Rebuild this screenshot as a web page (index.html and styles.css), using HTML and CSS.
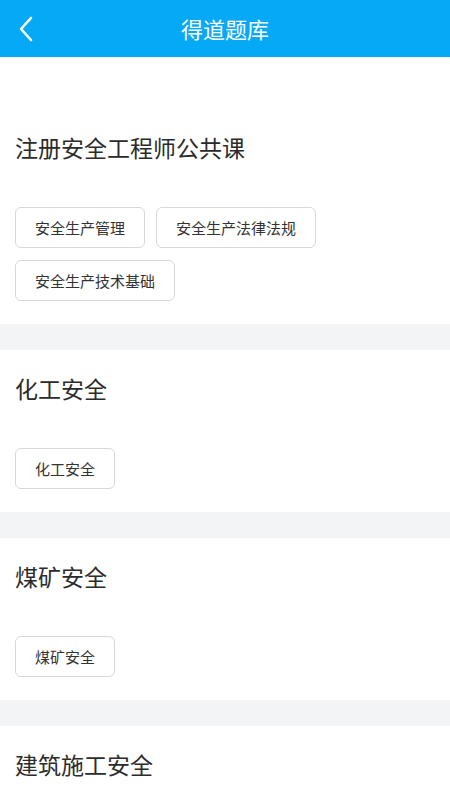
FILE: index.html
```html
<!DOCTYPE html>
<html lang="zh-CN">
<head>
<meta charset="utf-8">
<title>得道题库</title>
<link rel="stylesheet" href="styles.css">
</head>
<body>
<header class="topbar">
  <span class="back" aria-label="返回">
    <svg width="16" height="26" viewBox="0 0 16 26"><path d="M13 2 L3 13 L13 24" fill="none" stroke="#fff" stroke-width="2.6" stroke-linecap="round" stroke-linejoin="round"/></svg>
  </span>
  <h1 class="title">得道题库</h1>
</header>
<main>
  <section class="group first">
    <h2 class="group-title">注册安全工程师公共课</h2>
    <div class="chips">
      <span class="chip">安全生产管理</span>
      <span class="chip">安全生产法律法规</span>
      <span class="chip">安全生产技术基础</span>
    </div>
  </section>
  <section class="group">
    <h2 class="group-title">化工安全</h2>
    <div class="chips">
      <span class="chip">化工安全</span>
    </div>
  </section>
  <section class="group">
    <h2 class="group-title">煤矿安全</h2>
    <div class="chips">
      <span class="chip">煤矿安全</span>
    </div>
  </section>
  <section class="group">
    <h2 class="group-title">建筑施工安全</h2>
    <div class="chips">
      <span class="chip">建筑施工安全</span>
    </div>
  </section>
</main>
</body>
</html>
```
FILE: styles.css
```css
* { box-sizing: border-box; }
html, body { margin: 0; padding: 0; }
body {
  width: 450px;
  background: #f3f4f6;
  font-family: "Noto Sans CJK SC", "Noto Sans", sans-serif;
  color: #333;
}
.topbar {
  height: 57px;
  background: #06a9f6;
  display: flex;
  align-items: center;
  justify-content: center;
  position: relative;
}
.back {
  position: absolute;
  left: 18px;
  top: 16px;
  display: flex;
}
.title {
  margin: 0 0 2px;
  font-size: 22px;
  font-weight: 400;
  color: #fff;
  line-height: 30px;
}
main {
  display: flex;
  flex-direction: column;
  gap: 26px;
}
.group {
  background: #fff;
  padding: 23px 15px 23px;
}
.group.first { padding-top: 75px; }
.group-title {
  margin: 0 0 45px;
  font-size: 23px;
  font-weight: 400;
  line-height: 30px;
  color: #2b2b2b;
}
.chips {
  display: flex;
  flex-wrap: wrap;
  column-gap: 11px;
  row-gap: 12px;
}
.chip {
  height: 41px;
  padding: 0 19px;
  border: 1px solid #d8d8d8;
  border-radius: 6px;
  font-size: 15px;
  line-height: 39px;
  color: #333;
}
```
